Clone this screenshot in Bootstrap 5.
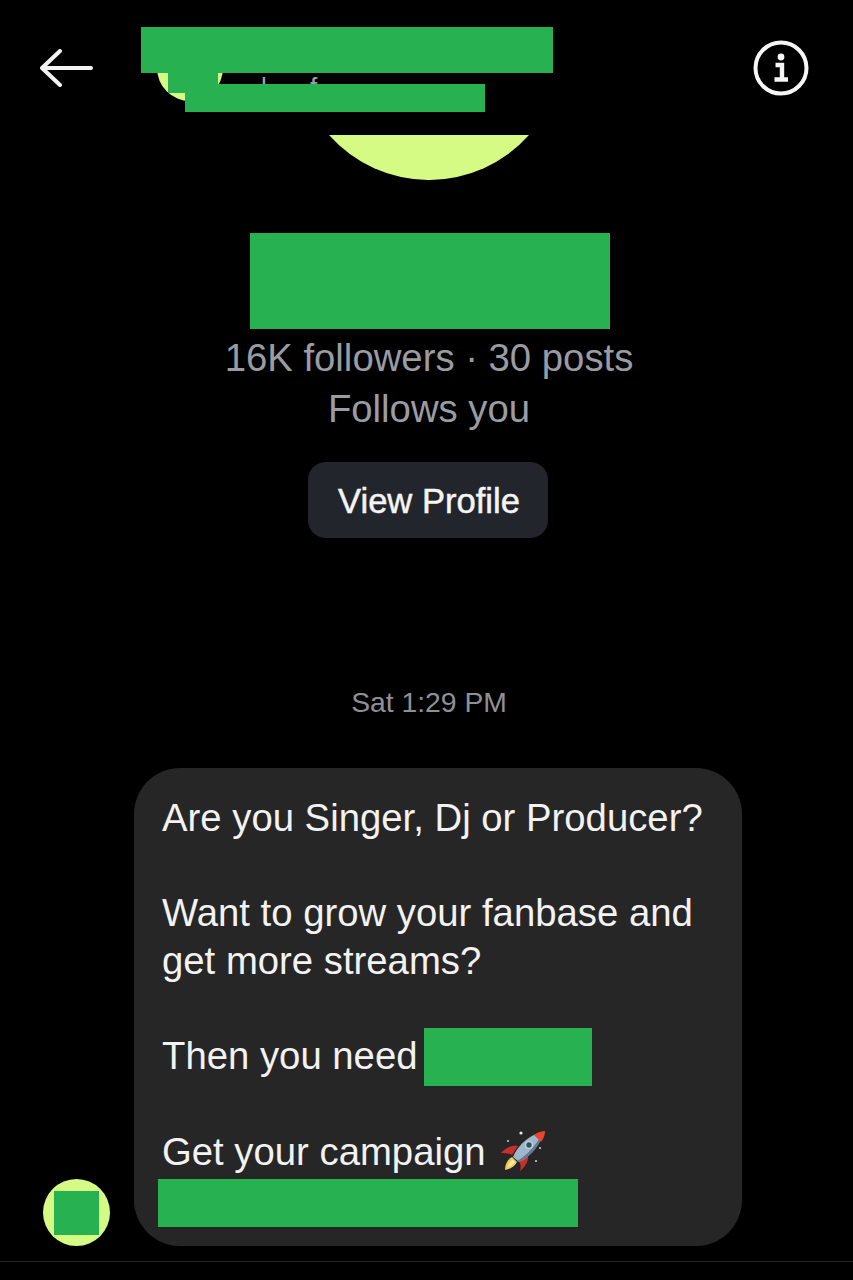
<!DOCTYPE html>
<html lang="en">
<head>
    <meta charset="UTF-8">
    <title>Conversation</title>
    <link href="https://cdn.jsdelivr.net/npm/bootstrap@5.3.0/dist/css/bootstrap.min.css" rel="stylesheet">
    <style>
        body { background: #000; font-family: "Liberation Sans", Arial, sans-serif; color: #f2f2f2; }
        .screen { width: 853px; height: 1280px; overflow: hidden; position: relative; }
        .top-bar { height: 135px; padding-left: 40px; padding-right: 44px; }
        .arrow-icon { margin-top: 1px; }
        .mini-avatar { width: 66px; height: 66px; background: #d5fb85; margin-left: 64px; }
        .hidden-sub { color: #a0a0a0; font-size: 26px; line-height: 30px; margin-left: 38px; margin-top: 38px; white-space: pre; }
        .blot { background: #27b150; }
        .blot-name { position: absolute; left: 141px; top: 27px; width: 412px; height: 46px; }
        .blot-sub { position: absolute; left: 185px; top: 84px; width: 300px; height: 28px; }
        .blot-face { position: absolute; left: 168px; top: 73px; width: 50px; height: 20px; }
        .center-col { padding-left: 5px; }
        .big-avatar { width: 200px; height: 45px; }
        .blot-title { width: 360px; height: 96px; margin-top: 53px; margin-left: 2px; }
        .stats { font-size: 38.3px; line-height: 51px; color: #9a9ca3; margin-top: 2.5px; }
        .profile-btn { width: 240px; height: 76px; margin-top: 28.5px; margin-right: 2px; padding: 3px 0 0 2px; background: #22252b; color: #f4f4f4; font-size: 34.6px; border: 0; border-radius: 18px; -webkit-text-stroke: 0.5px #f4f4f4; }
        .stamp { font-size: 28.3px; line-height: 40px; color: #8f9095; margin-top: 144px; }
        .thread { padding-left: 43px; margin-top: 46px; gap: 24px; }
        .sender { width: 67px; height: 67px; background: #d5fb85; }
        .sender-blot { width: 45px; height: 44px; }
        .bubble { width: 608px; height: 478px; background: #262626; border-radius: 46px; padding: 26px 0 0 28px; font-size: 38.3px; }
        .msg-line { height: 47.7px; line-height: 47.7px; white-space: nowrap; }
        .blot-word { width: 168px; height: 58px; margin-left: 6px; margin-top: 2px; }
        .blot-link { width: 420px; height: 48px; margin-left: -4px; margin-top: 3px; }
        .rocket { margin-left: 9px; }
        .foot-rule { margin-top: 15px; border-top: 1px solid #232323; }
    </style>
</head>
<body>
<div class="screen">
    <div class="top-bar d-flex align-items-center">
        <svg class="arrow-icon" width="53" height="38" viewBox="0 0 53 38" fill="none" stroke="#f4f4f4" stroke-width="4" stroke-linecap="round" stroke-linejoin="round">
            <path d="M51 19H3M20 2 2 19l18 17"/>
        </svg>
        <div class="mini-avatar rounded-circle flex-shrink-0"></div>
        <div class="hidden-sub">l      f</div>
        <svg class="ms-auto" width="56" height="56" viewBox="0 0 56 56" fill="none" stroke="#f6f6f6">
            <circle cx="28" cy="28" r="25.5" stroke-width="4"/>
            <circle cx="28" cy="17" r="3.4" fill="#f6f6f6" stroke="none"/>
            <path d="M22.5 25H29V39M21.5 39.5H35" stroke-width="4.4"/>
        </svg>
    </div>
    <div class="blot blot-name"></div>
    <div class="blot blot-face"></div>
    <div class="blot blot-sub"></div>

    <div class="center-col d-flex flex-column align-items-center">
        <svg class="big-avatar" viewBox="0 0 200 45">
            <path d="M0 0A133.6 133.6 0 0 0 200 0Z" fill="#d5fb85"/>
        </svg>
        <div class="blot blot-title"></div>
        <div class="stats text-center">
            <div>16K followers · 30 posts</div>
            <div>Follows you</div>
        </div>
        <button class="btn profile-btn" type="button">View Profile</button>
        <div class="stamp">Sat 1:29 PM</div>
    </div>

    <div class="thread d-flex align-items-end">
        <div class="sender rounded-circle d-flex align-items-center justify-content-center flex-shrink-0">
            <div class="blot sender-blot"></div>
        </div>
        <div class="bubble">
            <div class="msg-line">Are you Singer, Dj or Producer?</div>
            <div class="msg-line"></div>
            <div class="msg-line">Want to grow your fanbase and</div>
            <div class="msg-line">get more streams?</div>
            <div class="msg-line"></div>
            <div class="msg-line d-flex align-items-center">Then you need<div class="blot blot-word flex-shrink-0"></div></div>
            <div class="msg-line"></div>
            <div class="msg-line d-flex align-items-center">Get your campaign
                <svg class="rocket flex-shrink-0" width="60" height="55" viewBox="0 0 60 55">
                    <circle cx="26" cy="9" r="1.6" fill="#e8e8e8"/>
                    <circle cx="13" cy="17" r="1" fill="#d8d8d8"/>
                    <circle cx="45" cy="24" r="1" fill="#d8d8d8"/>
                    <circle cx="41" cy="37" r="1" fill="#d8d8d8"/>
                    <path d="M6 29C10 24 16 21 23 22L17 31C13 29 9 29 6 29Z" fill="#c62f2b"/>
                    <path d="M25 47C30 43 34 37 33 31L24 37C26 40 26 44 25 47Z" fill="#c62f2b"/>
                    <path d="M10 46C10 40 13 35 17 33L22 38C20 42 16 45 10 46Z" fill="#f5c95c"/>
                    <path d="M13 43C14 40 16 37 18 36L20 38C18 40 16 42 13 43Z" fill="#fff2c4"/>
                    <path d="M18 33C22 23 31 14 41 10L46 15C42 25 33 34 24 38Z" fill="#9fb6cc"/>
                    <path d="M22 37C28 34 38 25 44 15L46 15C42 25 33 34 24 38Z" fill="#66788f"/>
                    <path d="M39 11C43 8 47 7 50 7C50 11 49 14 46 18Z" fill="#e8452f"/>
                    <circle cx="34" cy="21" r="4" fill="#c3d2de"/>
                    <circle cx="34" cy="21" r="2.7" fill="#33525f"/>
                </svg>
            </div>
            <div class="blot blot-link"></div>
        </div>
    </div>
    <div class="foot-rule"></div>
</div>
<script src="https://cdn.jsdelivr.net/npm/bootstrap@5.3.0/dist/js/bootstrap.bundle.min.js"></script>
</body>
</html>
